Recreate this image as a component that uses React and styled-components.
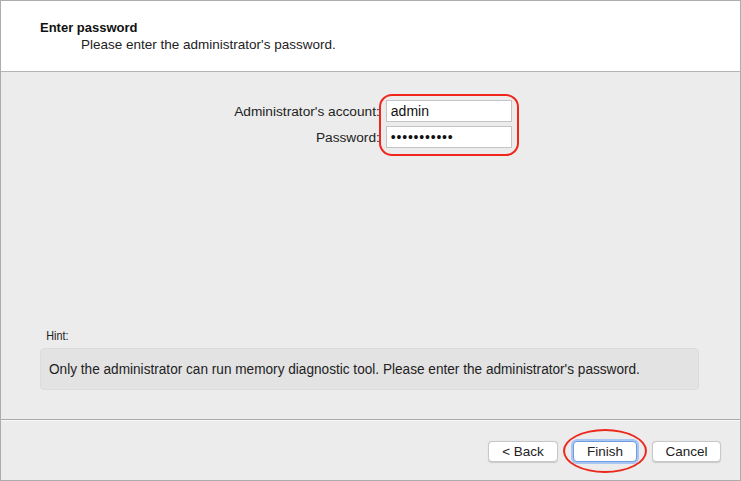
import React from "react";
import styled, { createGlobalStyle } from "styled-components";

const Global = createGlobalStyle`
  html, body { margin: 0; padding: 0; background: #ececec; }
  body { font-family: "Liberation Sans", Arial, sans-serif; color: #1d1d1d; }
  * { box-sizing: border-box; }
`;

const Window = styled.div`
  width: 741px;
  height: 481px;
  border: 1px solid #adadad;
  background: #ececec;
  display: flex;
  flex-direction: column;
`;

const Header = styled.div`
  height: 71px;
  flex: none;
  background: #fff;
  border-bottom: 1px solid #b4b4b4;
  padding: 19px 0 0 39px;
  font-size: 13px;
  line-height: 16px;
`;

const Title = styled.div`
  font-weight: bold;
  color: #111;
`;

const Subtitle = styled.div`
  padding-left: 41px;
  margin-top: 1px;
  color: #222;
  font-size: 13.5px;
`;

const Body = styled.div`
  flex: 1;
  display: flex;
  flex-direction: column;
  padding: 28px 41px 0 39px;
  border-bottom: 1px solid #a9a9a9;
  box-shadow: 0 1px 0 #f8f8f8;
`;

const FormWrap = styled.div`
  display: flex;
  justify-content: center;
  padding-left: 7px;
`;

const FormGroup = styled.div`
  display: grid;
  grid-template-columns: auto 126px;
  grid-template-rows: 22px 22px;
  column-gap: 6px;
  row-gap: 4px;
  align-items: center;
`;

const Label = styled.label`
  grid-column: 1;
  grid-row: ${(p) => p.$row};
  font-size: 13.7px;
  text-align: right;
  color: #222;
  white-space: nowrap;
`;

const Input = styled.div`
  grid-column: 2;
  grid-row: ${(p) => p.$row};
  height: 22px;
  border: 1px solid #c4c4c4;
  background: #fff;
  font-size: 14px;
  line-height: 20px;
  padding-left: 4px;
  color: #111;
  letter-spacing: ${(p) => (p.$dots ? "0.8px" : "0")};
`;

const RedRing = styled.div`
  grid-column: 2;
  grid-row: 1 / span 2;
  align-self: stretch;
  margin: -6px -7px -8px -7px;
  border: 2px solid #f0261c;
  border-radius: 13px;
  pointer-events: none;
  z-index: 1;
`;

const Spacer = styled.div`
  flex: 1;
`;

const HintLabel = styled.div`
  font-size: 12px;
  color: #222;
  padding-left: 7px;
  margin-bottom: 5px;
  transform: scaleX(0.9);
  transform-origin: left;
`;

const HintBox = styled.div`
  height: 42px;
  background: #e3e3e3;
  border: 1px solid #dcdcdc;
  border-radius: 4px;
  padding: 0 0 0 8px;
  display: flex;
  align-items: center;
  font-size: 14px;
  color: #222;
  margin-bottom: 29px;
`;

const HintText = styled.span`
  display: inline-block;
  transform: scaleX(0.973);
  transform-origin: left;
  white-space: nowrap;
`;

const Footer = styled.div`
  height: 60px;
  flex: none;
  display: flex;
  justify-content: flex-end;
  align-items: center;
  gap: 15px;
  padding: 2px 19px 0 0;
`;

const ButtonWrap = styled.div`
  position: relative;
`;

const Button = styled.button`
  width: ${(p) => p.$w}px;
  height: 21px;
  font-family: inherit;
  font-size: 13.5px;
  color: #222;
  background: #fff;
  border: 1px solid ${(p) => (p.$focus ? "#6f9be0" : "#c8c8c8")};
  border-radius: 4px;
  padding: 0;
  box-shadow: ${(p) =>
    p.$focus ? "0 0 0 2px #a9c6f2, 0 1px 1px rgba(0,0,0,0.1)" : "0 0.5px 1px rgba(0,0,0,0.15)"};
`;

const RedEllipse = styled.div`
  position: absolute;
  left: -10px;
  right: -10px;
  top: -12px;
  bottom: -11px;
  border: 2px solid #eb2a1e;
  border-radius: 50%;
  pointer-events: none;
`;

export default function App() {
  return (
    <>
      <Global />
      <Window>
        <Header>
          <Title>Enter password</Title>
          <Subtitle>Please enter the administrator's password.</Subtitle>
        </Header>
        <Body>
          <FormWrap>
            <FormGroup>
              <Label $row={1}>Administrator's account:</Label>
              <Input $row={1}>admin</Input>
              <Label $row={2}>Password:</Label>
              <Input $row={2} $dots>•••••••••••</Input>
              <RedRing />
            </FormGroup>
          </FormWrap>
          <Spacer />
          <HintLabel>Hint:</HintLabel>
          <HintBox>
            <HintText>
              Only the administrator can run memory diagnostic tool. Please enter the administrator's password.
            </HintText>
          </HintBox>
        </Body>
        <Footer>
          <Button $w={70}>&lt; Back</Button>
          <ButtonWrap>
            <Button $w={64} $focus>Finish</Button>
            <RedEllipse />
          </ButtonWrap>
          <Button $w={69}>Cancel</Button>
        </Footer>
      </Window>
    </>
  );
}
